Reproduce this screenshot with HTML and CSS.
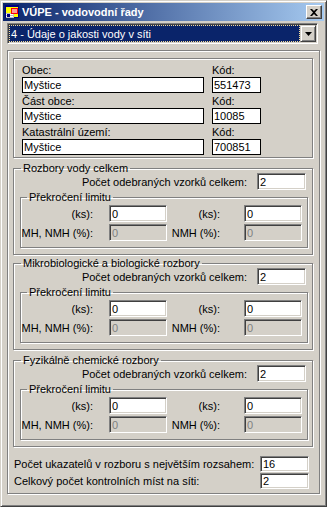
FILE: index.html
```html
<!DOCTYPE html>
<html lang="cs">
<head>
    <meta charset="UTF-8">
    <title>VÚPE - vodovodní řady</title>
    <link rel="stylesheet" href="styles.css">
</head>
<body>
    <div class="window">
        <div class="titlebar">
            <svg class="app-icon" width="16" height="16" viewBox="0 0 16 16">
                <rect x="1.5" y="1.5" width="13" height="12" fill="#ffff00" stroke="#000080"/>
                <rect x="1" y="1" width="14" height="2" fill="#000080"/>
                <rect x="2" y="9" width="8" height="5" fill="#c0c0c0"/>
                <rect x="2" y="10" width="7" height="1" fill="#fff"/>
                <rect x="2" y="12" width="7" height="1" fill="#fff"/>
                <rect x="3" y="10" width="3" height="3" fill="#000080"/>
                <rect x="7.5" y="4.5" width="6" height="5" fill="#ff9999" stroke="#ff0000"/>
            </svg>
            <span class="title">VÚPE - vodovodní řady</span>
            <span class="close-btn">
                <svg width="8" height="7" viewBox="0 0 8 7">
                    <path d="M0 0h2l2 2 2-2h2L5 3.5 8 7H6L4 5 2 7H0l3-3.5z" fill="#000"/>
                </svg>
            </span>
        </div>

        <div class="combo">
            <div class="combo-value"><span>4 - Údaje o jakosti vody v síti</span></div>
            <div class="combo-arrow">
                <svg width="7" height="4" viewBox="0 0 7 4"><path d="M0 0h7L3.5 4z" fill="#000"/></svg>
            </div>
        </div>

        <div class="panel">
            <div class="address">
                <label>Obec:</label>
                <label>Kód:</label>
                <input class="flat" value="Myštice">
                <input class="flat" value="551473">
                <label>Část obce:</label>
                <label>Kód:</label>
                <input class="flat" value="Myštice">
                <input class="flat" value="10085">
                <label>Katastrální území:</label>
                <label>Kód:</label>
                <input class="flat" value="Myštice">
                <input class="flat" value="700851">
            </div>

            <fieldset class="group">
                <legend>Rozbory vody celkem</legend>
                <div class="count-row">
                    <label>Počet odebraných vzorků celkem:</label>
                    <input class="field" value="2">
                </div>
                <fieldset class="group sub">
                    <legend>Překročení limitu</legend>
                    <div class="limits">
                        <label>(ks):</label>
                        <input class="field" value="0">
                        <label class="second">(ks):</label>
                        <input class="field" value="0">
                        <label>MH, NMH (%):</label>
                        <input class="field" value="0" disabled>
                        <label class="second">NMH (%):</label>
                        <input class="field" value="0" disabled>
                    </div>
                </fieldset>
            </fieldset>

            <fieldset class="group">
                <legend>Mikrobiologické a biologické rozbory</legend>
                <div class="count-row">
                    <label>Počet odebraných vzorků celkem:</label>
                    <input class="field" value="2">
                </div>
                <fieldset class="group sub">
                    <legend>Překročení limitu</legend>
                    <div class="limits">
                        <label>(ks):</label>
                        <input class="field" value="0">
                        <label class="second">(ks):</label>
                        <input class="field" value="0">
                        <label>MH, NMH (%):</label>
                        <input class="field" value="0" disabled>
                        <label class="second">NMH (%):</label>
                        <input class="field" value="0" disabled>
                    </div>
                </fieldset>
            </fieldset>

            <fieldset class="group third">
                <legend>Fyzikálně chemické rozbory</legend>
                <div class="count-row">
                    <label>Počet odebraných vzorků celkem:</label>
                    <input class="field" value="2">
                </div>
                <fieldset class="group sub">
                    <legend>Překročení limitu</legend>
                    <div class="limits">
                        <label>(ks):</label>
                        <input class="field" value="0">
                        <label class="second">(ks):</label>
                        <input class="field" value="0">
                        <label>MH, NMH (%):</label>
                        <input class="field" value="0" disabled>
                        <label class="second">NMH (%):</label>
                        <input class="field" value="0" disabled>
                    </div>
                </fieldset>
            </fieldset>

            <div class="summary">
                <label>Počet ukazatelů v rozboru s největším rozsahem:</label>
                <input class="field" value="16">
                <label>Celkový počet kontrolních míst na síti:</label>
                <input class="field" value="2">
            </div>
        </div>
    </div>
</body>
</html>
```

FILE: styles.css
```css
* {
    box-sizing: border-box;
}

body {
    margin: 0;
    font-family: "Liberation Sans", Arial, sans-serif;
    font-size: 11px;
    color: #000000;
    background-color: #d4d0c8;
}

.window {
    width: 327px;
    height: 507px;
    overflow: hidden;
    padding: 2px;
    background-color: #d4d0c8;
    border: 1px solid;
    border-color: #d4d0c8 #404040 #404040 #d4d0c8;
    box-shadow: inset 1px 1px #ffffff, inset -1px -1px #808080;
}

/* заголовок окна */
.titlebar {
    display: flex;
    align-items: center;
    height: 18px;
    padding: 0 2px 0 1px;
    background: linear-gradient(to right, #0a246a, #a6caf0);
    color: #ffffff;
}

.app-icon {
    margin-right: 2px;
}

.title {
    flex: 1;
    font-weight: bold;
}

.close-btn {
    display: flex;
    align-items: center;
    justify-content: center;
    width: 16px;
    height: 14px;
    background-color: #d4d0c8;
    border: 1px solid;
    border-color: #ffffff #404040 #404040 #ffffff;
    box-shadow: inset -1px -1px #808080;
}

/* выпадающий список */
.combo {
    display: flex;
    height: 21px;
    margin: 2px 6px 0 4px;
    padding: 1px;
    background-color: #ffffff;
    border: 1px solid;
    border-color: #808080 #ffffff #ffffff #808080;
    box-shadow: inset 1px 1px #404040, inset -1px -1px #d4d0c8;
}

.combo-value {
    flex: 1;
    display: flex;
    align-items: center;
    padding-left: 1px;
    background-color: #0a246a;
    color: #ffffff;
    border: 1px dotted #f5db95;
}

.combo-arrow {
    display: flex;
    align-items: center;
    justify-content: center;
    width: 16px;
    background-color: #d4d0c8;
    border: 1px solid;
    border-color: #d4d0c8 #404040 #404040 #d4d0c8;
    box-shadow: inset 1px 1px #ffffff, inset -1px -1px #808080;
}

/* основная панель */
.panel {
    margin: 6px 4px 0 4px;
    padding: 7px 6px 4px 5px;
    border: 1px solid #808080;
    box-shadow: inset 1px 1px #ffffff, 1px 1px #ffffff;
}

.address {
    display: grid;
    grid-template-columns: 182px 49px;
    column-gap: 8px;
    padding: 4px 0 1px 8px;
    border: 1px solid #808080;
    box-shadow: inset 1px 1px #ffffff, 1px 1px #ffffff;
}

.address label {
    height: 14px;
    line-height: 14px;
}

input {
    font: inherit;
    margin: 0;
    outline: none;
}

.flat {
    height: 16px;
    margin-bottom: 1px;
    padding: 0 1px;
    border: 1px solid #000000;
    background-color: #ffffff;
    color: #000000;
}

.field {
    width: 49px;
    height: 17px;
    padding: 0 2px;
    background-color: #ffffff;
    color: #000000;
    border: 1px solid;
    border-color: #808080 #ffffff #ffffff #808080;
    box-shadow: inset 1px 1px #404040, inset -1px -1px #d4d0c8;
}

.field:disabled {
    background-color: #d4d0c8;
    color: #808080;
}

/* рамки групп */
.group {
    min-width: 0;
    margin: 2px 0 0 0;
    padding: 0 4px 6px 6px;
    border: 1px solid #808080;
    box-shadow: inset 1px 1px #ffffff, 1px 1px #ffffff;
}

.group legend {
    margin-left: 1px;
    padding: 0 2px;
    line-height: 12px;
}

.address + .group {
    margin-top: 4px;
}

.group.third {
    margin-top: 4px;
}

.count-row {
    display: flex;
    justify-content: flex-end;
    align-items: center;
    margin-top: -1px;
    padding-right: 2px;
}

.count-row label {
    margin-right: 10px;
}

.group.sub {
    margin-top: 1px;
    padding: 2px 0 6px 0;
}

.group.sub legend {
    margin-left: 6px;
}

.limits {
    display: grid;
    grid-template-columns: 88px 58px 77px 58px;
    row-gap: 2px;
    align-items: center;
}

.limits label {
    text-align: right;
    padding-right: 16px;
}

.limits label.second {
    padding-right: 24px;
}

.limits .field {
    width: 58px;
}

/* нижние поля */
.summary {
    display: grid;
    grid-template-columns: 1fr 49px;
    row-gap: 1px;
    align-items: center;
    margin: 9px 4px 0 1px;
}

.summary .field {
    height: 16px;
}
```
